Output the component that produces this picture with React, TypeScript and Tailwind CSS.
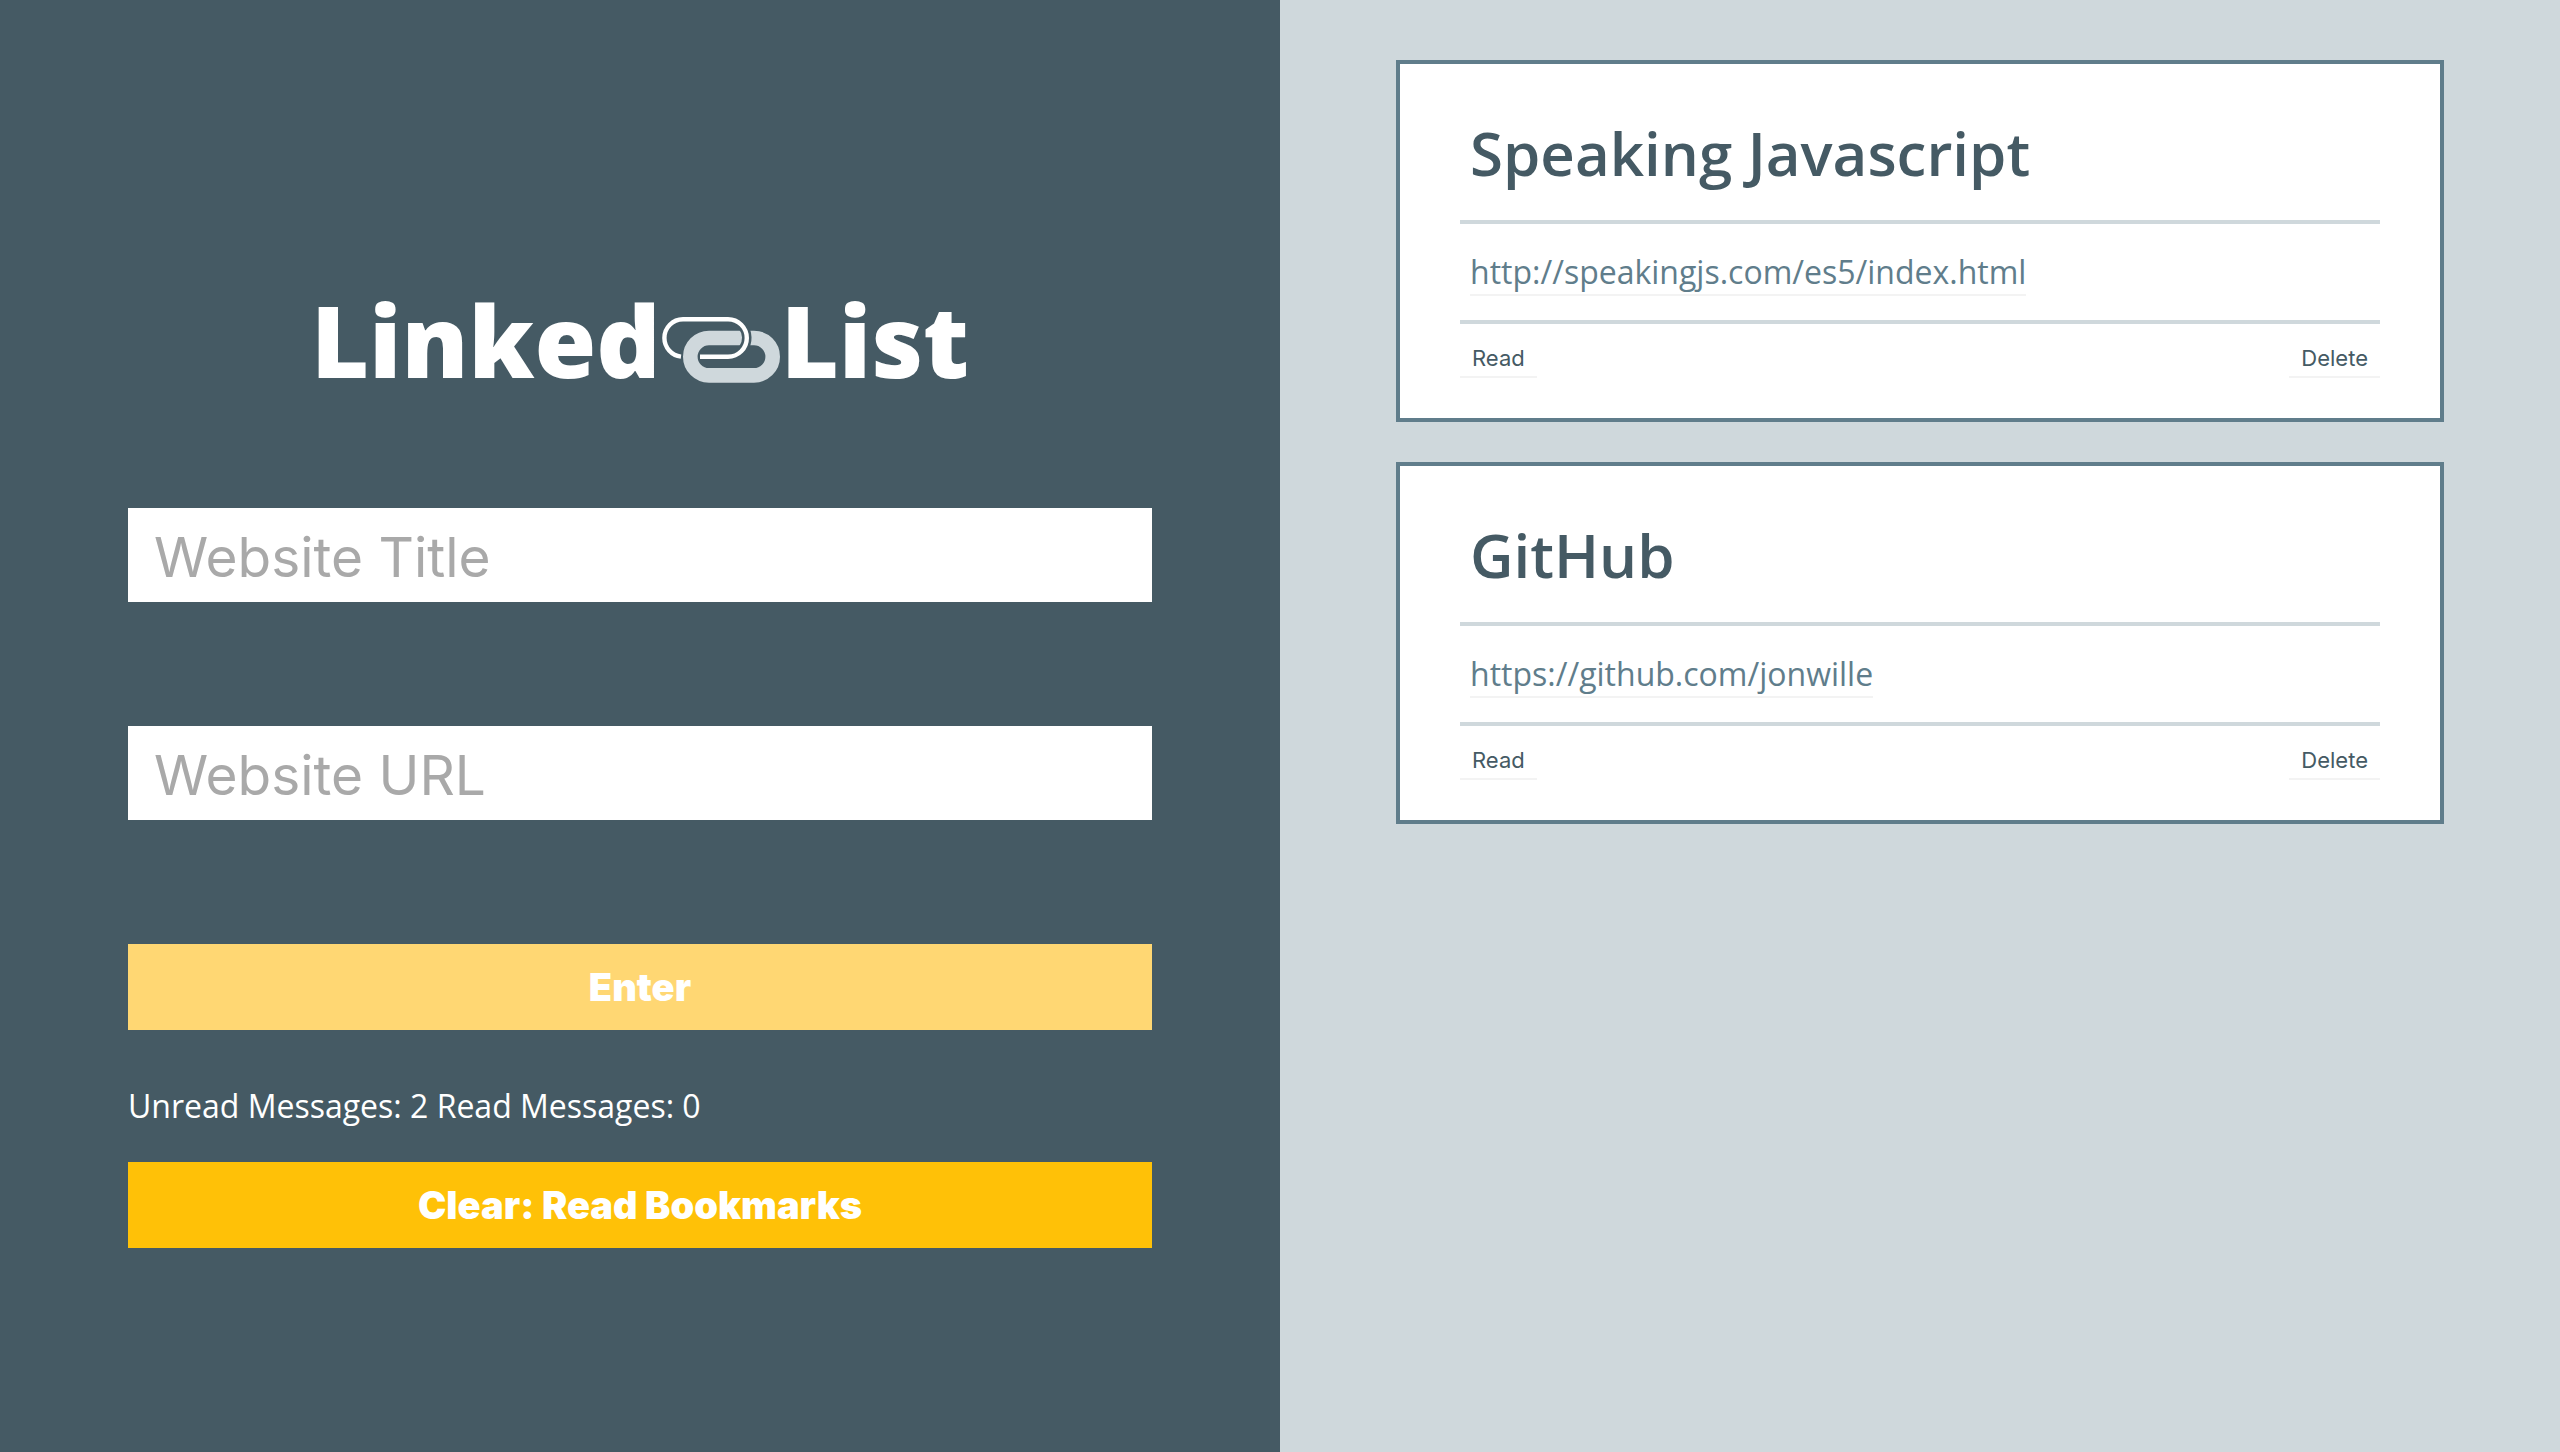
import React, { useState } from "react";

type Bookmark = { title: string; url: string };

const bookmarks: Bookmark[] = [
  { title: "Speaking Javascript", url: "http://speakingjs.com/es5/index.html" },
  { title: "GitHub", url: "https://github.com/jonwille" },
];

function LinkIcon() {
  return (
    <svg
      className="h-[136px] w-[120px] shrink-0"
      viewBox="660 271 120 136"
      fill="none"
      aria-hidden="true"
    >
      <path
        d="M708 338 H753 A18.7 18.7 0 0 1 753 375.4 H708 A18.7 18.7 0 0 1 708 338 Z"
        stroke="#cfd8dc"
        strokeWidth="14.6"
      />
      <path d="M741.6 326 A19 19 0 0 1 742.2 349" stroke="#455a64" strokeWidth="9.5" />
      <path
        d="M680 356.6 A18.8 18.8 0 0 1 663.4 338 A18.8 18.8 0 0 1 682 319.2 H727 A18.8 18.8 0 0 1 727 356.8 H699"
        stroke="#ffffff"
        strokeWidth="4.4"
      />
    </svg>
  );
}

function Field({ label, value, onChange }: { label: string; value: string; onChange: (v: string) => void }) {
  return (
    <input
      type="text"
      aria-label={label}
      placeholder={label}
      value={value}
      onChange={(e) => onChange(e.target.value)}
      className="h-[94px] w-full rounded-none bg-white px-[26px] pt-1 font-['Inter',sans-serif] text-[55px] text-[#455a64] outline-none placeholder:text-[#a9a9a9]"
    />
  );
}

function CardButton({ children }: { children: React.ReactNode }) {
  return (
    <button
      type="button"
      className="border-b-2 border-[#f3f3f3] px-3 font-['Inter',sans-serif] text-[22px] leading-[36px] text-[#455a64]"
    >
      {children}
    </button>
  );
}

function Card({ title, url }: Bookmark) {
  return (
    <article className="border-4 border-[#607d8b] bg-white px-[60px] pt-[60px] pb-10">
      <h2 className="px-2.5 pb-[38px] text-[60px] leading-[58px] font-semibold text-[#455a64]">{title}</h2>
      <div className="flex border-y-4 border-[#cfd8dc] px-2.5 pt-[26px] pb-6">
        <a href={url} className="border-b-2 border-[#f3f3f3] text-[32px] leading-[44px] text-[#607d8b]">
          {url}
        </a>
      </div>
      <div className="flex justify-between pt-4">
        <CardButton>Read</CardButton>
        <CardButton>Delete</CardButton>
      </div>
    </article>
  );
}

export default function App() {
  const [title, setTitle] = useState("");
  const [url, setUrl] = useState("");

  return (
    <div className="grid min-h-screen grid-cols-2 font-['Open_Sans',sans-serif]">
      <section className="bg-[#455a64] px-[10%] pt-[271px] pb-10 text-white">
        <h1 className="flex items-center justify-center text-[100px] leading-[136px] font-extrabold">
          <span>Linked</span>
          <LinkIcon />
          <span>List</span>
        </h1>
        <form className="mt-[101px] flex flex-col" onSubmit={(e) => e.preventDefault()}>
          <div className="flex flex-col gap-[124px]">
            <Field label="Website Title" value={title} onChange={setTitle} />
            <Field label="Website URL" value={url} onChange={setUrl} />
            <button
              type="submit"
              disabled={!title || !url}
              className="h-[86px] w-full bg-[#ffc107] font-['Inter',sans-serif] text-[38px] font-black text-white disabled:bg-[#ffd773]"
            >
              Enter
            </button>
          </div>
          <p className="mt-[54px] text-[32px] leading-[44px]">Unread Messages: 2 Read Messages: 0</p>
          <button
            type="button"
            className="mt-[34px] h-[86px] w-full bg-[#ffc107] font-['Inter',sans-serif] text-[38px] font-black text-white"
          >
            Clear: Read Bookmarks
          </button>
        </form>
      </section>
      <section className="flex flex-col gap-10 bg-[#cfd8dc] px-[116px] py-[60px]">
        {bookmarks.map((b) => (
          <Card key={b.url} title={b.title} url={b.url} />
        ))}
      </section>
    </div>
  );
}
